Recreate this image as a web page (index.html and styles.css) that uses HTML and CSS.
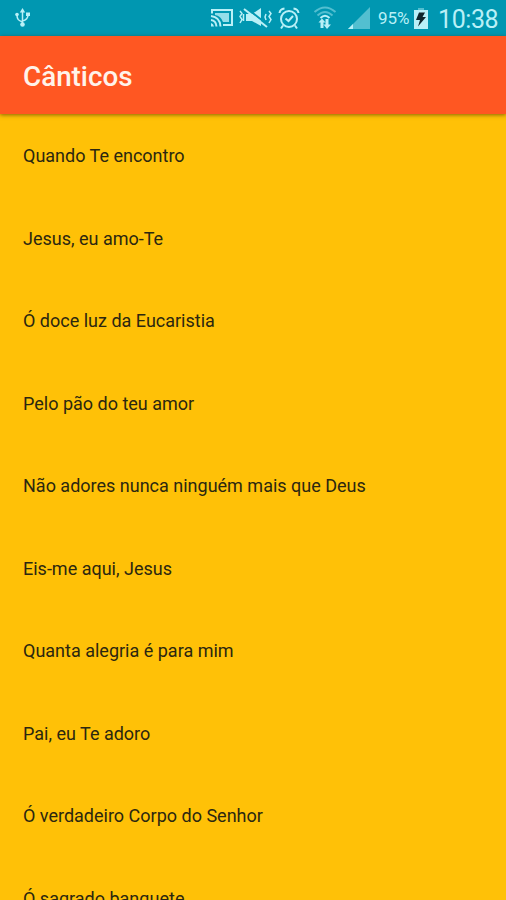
FILE: index.html
```html
<!DOCTYPE html>
<html lang="pt">
<head>
<meta charset="utf-8">
<title>Cânticos</title>
<link rel="stylesheet" href="styles.css">
</head>
<body>
<div class="status">
  <svg class="icon usb" width="16" height="20" viewBox="0 0 16 20">
    <path class="line" d="M7.500 16V3M7.500 14C3.500 12.500 2 11.500 2 7M7.500 13C11.500 12 13 10.500 13 7"/>
    <path class="fill" d="M7.500 0L10.200 4.500H4.800zM11 4.500h4v3.500h-4z"/><circle class="fill" cx="2" cy="6.500" r="1.800"/><circle class="fill" cx="7.500" cy="16.500" r="2.300"/>
  </svg>
  <svg class="icon cast" width="24" height="20" viewBox="0 0 24 20">
    <path class="line thick" d="M2 5.500V2H22V17H13"/>
    <path class="fill soft" d="M5 5H19V14H13Q11 8 5 7z"/>
    <path class="line thick" d="M1 12Q6 12.500 6.500 18.500M1 8Q10 9 10.500 18.500"/><path class="fill" d="M1 15Q3.500 15.500 4 18.500H1z"/>
  </svg>
  <svg class="icon mute" width="34" height="22" viewBox="0 0 34 22">
    <path class="fill" d="M8 7H14L23 1V19L14 14H8z"/>
    <path class="cut" d="M7 0L30 18"/>
    <path class="line thick" d="M6 2L29 20"/>
    <path class="line" d="M2 4l2 2.500-2 3 2 3-2 3.500M5.500 7v7M28 7l-1 3 1 3M31 4l2 2.500-2 3 2 3-2 3.500"/>
  </svg>
  <svg class="icon alarm" width="22" height="23" viewBox="0 0 22 23">
    <circle class="line thick" cx="11" cy="12" r="8"/>
    <path class="line thick" d="M1.500 6Q2 2 6.500 1.500M20.500 6Q20 2 15.500 1.500M5 18.500L3 21.500M17 18.500L19 21.500M7.500 11.500L10.500 14L15 9"/>
  </svg>
  <svg class="icon wifi" width="24" height="24" viewBox="0 0 24 24">
    <path class="line thick faint" d="M1.500 6Q12-3 22.500 6M4.500 9.500Q12 2.500 19.500 9.500"/>
    <path class="line thick" d="M7.500 12Q12 7.500 16.500 12"/>
    <path class="fill" d="M9 12.500l3.500 4H10.500V22H7.500V16.500H5.500zM12.500 13h3v5.500H18l-4 4.500-3.500-4.500h2z"/>
  </svg>
  <svg class="icon signal" width="22" height="22" viewBox="0 0 22 22">
    <path class="fill faint" d="M22 0V22H0z"/><path class="fill" d="M5 17V22H0z"/>
  </svg>
  <span class="percent">95%</span>
  <svg class="icon battery" width="14" height="21" viewBox="0 0 14 21">
    <path class="fill faint" d="M4 0h6v3H4z"/><path class="fill" d="M0 2H14V21H0z"/>
    <path class="bolt" d="M5 4.500H11L8.500 9H12L4 18.500L6 12H2z"/>
  </svg>
  <span class="clock">10:38</span>
</div>
<header class="bar"><h1>Cânticos</h1></header>
<ul class="songs">
  <li>Quando Te encontro</li>
  <li>Jesus, eu amo-Te</li>
  <li>Ó doce luz da Eucaristia</li>
  <li>Pelo pão do teu amor</li>
  <li>Não adores nunca ninguém mais que Deus</li>
  <li>Eis-me aqui, Jesus</li>
  <li>Quanta alegria é para mim</li>
  <li>Pai, eu Te adoro</li>
  <li>Ó verdadeiro Corpo do Senhor</li>
  <li>Ó sagrado banquete</li>
</ul>
</body>
</html>
```
FILE: styles.css
```css
* { box-sizing: border-box; }
body {
  margin: 0;
  height: 900px;
  overflow: hidden;
  display: flex;
  flex-direction: column;
  background: #ffc107;
  font-family: Roboto, "Liberation Sans", sans-serif;
}
.status {
  flex: none;
  height: 36px;
  display: flex;
  align-items: center;
  padding: 0 7px 0 15px;
  background: #0097b1;
  color: #b9f0f7;
}
.icon { flex: none; display: block; }
.usb { margin-right: auto; }
.cast { margin-right: 4px; }
.mute { margin-right: 6px; }
.alarm { margin-right: 13px; }
.wifi { margin-right: 11px; }
.signal { margin-right: 8px; }
.percent { width: 36px; font-size: 17px; white-space: nowrap; }
.clock { width: 61px; margin-left: 10px; font-size: 25px; letter-spacing: -.4px; line-height: 36px; padding-top: 3px; white-space: nowrap; }
.line { fill: none; stroke: #b9f0f7; stroke-width: 1.5; }
.thick { stroke-width: 2; }
.fill { fill: #b9f0f7; }
.soft { opacity: .8; }
.faint { opacity: .45; }
.cut { fill: none; stroke: #0097b1; stroke-width: 2; }
.bolt { fill: #10252b; }
.bar {
  flex: none;
  height: 78px;
  display: flex;
  align-items: center;
  padding: 3px 23px 0;
  background: #ff5722;
  box-shadow: 0 1px 4px rgba(60, 40, 0, .6);
}
.bar h1 { margin: 0; font-size: 27.800px; font-weight: 500; color: #fff3ea; }
.songs { margin: 0; padding: .4px 0 0; list-style: none; }
.songs li {
  height: 82.5px;
  display: flex;
  align-items: center;
  padding: 0 23px;
  font-size: 18px;
  color: #2b2710;
  white-space: nowrap;
}
```
